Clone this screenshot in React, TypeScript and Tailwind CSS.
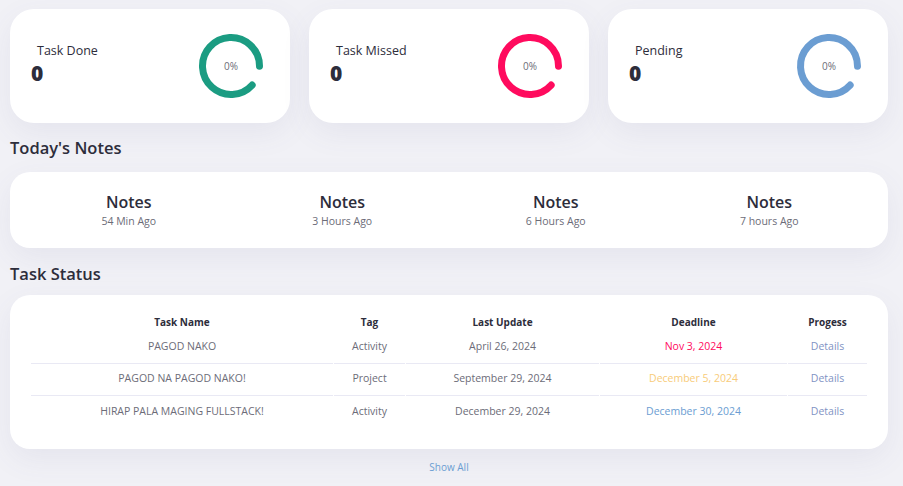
import React from 'react';

const font = { fontFamily: '"Open Sans", "Liberation Sans", sans-serif' };

type Stat = { label: string; value: number; color: string };

const stats: Stat[] = [
  { label: 'Task Done', value: 0, color: '#1b9c82' },
  { label: 'Task Missed', value: 0, color: '#ff0b5e' },
  { label: 'Pending', value: 0, color: '#6b9dd2' },
];

const notes = [
  { title: 'Notes', time: '54 Min Ago' },
  { title: 'Notes', time: '3 Hours Ago' },
  { title: 'Notes', time: '6 Hours Ago' },
  { title: 'Notes', time: '7 hours Ago' },
];

const tasks = [
  { name: 'PAGOD NAKO', tag: 'Activity', updated: 'April 26, 2024', deadline: 'Nov 3, 2024', color: 'text-[#ff0b5e]' },
  { name: 'PAGOD NA PAGOD NAKO!', tag: 'Project', updated: 'September 29, 2024', deadline: 'December 5, 2024', color: 'text-[#f8cc7a]' },
  { name: 'HIRAP PALA MAGING FULLSTACK!', tag: 'Activity', updated: 'December 29, 2024', deadline: 'December 30, 2024', color: 'text-[#6b9dd2]' },
];

function Donut({ color }: { color: string }) {
  const r = 28.5;
  const c = 2 * Math.PI * r;
  const arc = c * (318 / 360);
  return (
    <div className="relative w-[66px] h-[66px]">
      <svg width="66" height="66" viewBox="0 0 66 66">
        <circle
          cx="33"
          cy="33"
          r={r}
          fill="none"
          stroke={color}
          strokeWidth="7"
          strokeLinecap="round"
          strokeDasharray={`${arc} ${c}`}
          transform="rotate(42 33 33)"
        />
      </svg>
      <span className="absolute inset-0 flex items-center justify-center text-[10px] text-[#6c6c78]">0%</span>
    </div>
  );
}

export default function App() {
  return (
    <div className="min-h-[486px] bg-[#f1f1f6] pl-[10px] pr-[15px] pt-[9px] pb-[12px] text-[#2d2d3b]" style={font}>
      {/* Stat cards */}
      <section className="grid grid-cols-3 gap-[19px]">
        {stats.map((s) => (
          <div
            key={s.label}
            className="h-[114px] bg-white rounded-[24px] shadow-[0_10px_30px_rgba(90,90,140,0.08)] flex items-center justify-between pl-[21px] pr-[26px]"
          >
            <div className="-mt-[3px]">
              <p className="text-[12.5px] leading-[16px] pl-[6px]">{s.label}</p>
              <p className="text-[21px] leading-[28px] font-extrabold">{s.value}</p>
            </div>
            <Donut color={s.color} />
          </div>
        ))}
      </section>

      {/* Today's Notes */}
      <h2 className="text-[16.5px] font-semibold mt-[13px] leading-[24px]">Today's Notes</h2>
      <section className="mt-[12px] h-[76px] bg-white rounded-[20px] shadow-[0_10px_30px_rgba(90,90,140,0.08)] grid grid-cols-4 px-[12px] items-center">
        {notes.map((n) => (
          <div key={n.time} className="text-center">
            <p className="text-[16px] font-semibold leading-[20px]">{n.title}</p>
            <p className="text-[10.5px] text-[#6c6c78] leading-[16px] mt-[1px]">{n.time}</p>
          </div>
        ))}
      </section>

      {/* Task Status */}
      <h2 className="text-[16.5px] font-semibold mt-[14px] leading-[24px]">Task Status</h2>
      <section className="mt-[9px] h-[154px] bg-white rounded-[20px] shadow-[0_10px_30px_rgba(90,90,140,0.08)] px-[20px] pt-[19px]">
        <table className="w-full border-separate border-spacing-x-[1px] border-spacing-y-0 text-center">
          <colgroup>
            <col className="w-[302px]" />
            <col className="w-[71px]" />
            <col className="w-[193px]" />
            <col className="w-[187px]" />
            <col />
          </colgroup>
          <thead>
            <tr className="text-[10px] font-bold">
              <th className="h-[17px]">Task Name</th>
              <th>Tag</th>
              <th>Last Update</th>
              <th>Deadline</th>
              <th>Progess</th>
            </tr>
          </thead>
          <tbody className="text-[10.5px] text-[#6c6c78]">
            {tasks.map((t, i) => {
              const line = i < tasks.length - 1 ? 'border-b border-[#e9e9f4]' : '';
              return (
                <tr key={t.name}>
                  <td className={`h-[32.5px] ${line}`}>{t.name}</td>
                  <td className={line}>{t.tag}</td>
                  <td className={line}>{t.updated}</td>
                  <td className={`${t.color} ${line}`}>{t.deadline}</td>
                  <td className={`text-[#7f93c4] ${line}`}>Details</td>
                </tr>
              );
            })}
          </tbody>
        </table>
      </section>

      <div className="mt-[8px] text-center leading-[16px]">
        <a className="text-[10px] text-[#6b9dd2]">Show All</a>
      </div>
    </div>
  );
}
